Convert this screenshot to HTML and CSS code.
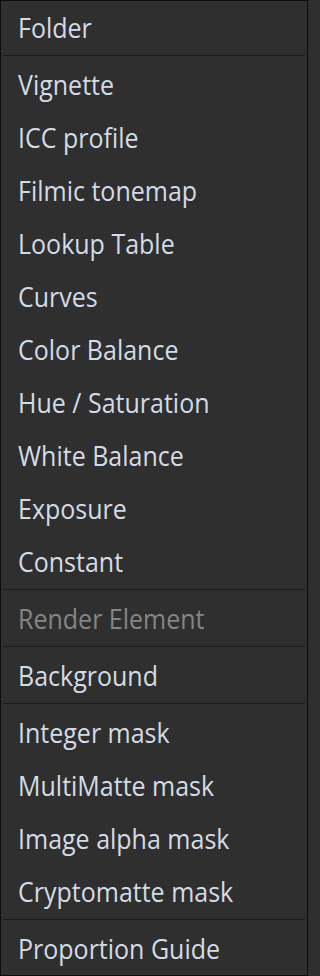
FILE: index.html
```html
<!DOCTYPE html>
<html>
<head>
<meta charset="utf-8">
<link rel="stylesheet" href="styles.css">
</head>
<body>
<div class="menu">
  <div class="item"><span class="label">Folder</span></div>
  <div class="sep"></div>
  <div class="item"><span class="label">Vignette</span></div>
  <div class="item"><span class="label">ICC profile</span></div>
  <div class="item"><span class="label">Filmic tonemap</span></div>
  <div class="item"><span class="label">Lookup Table</span></div>
  <div class="item"><span class="label">Curves</span></div>
  <div class="item"><span class="label">Color Balance</span></div>
  <div class="item"><span class="label">Hue / Saturation</span></div>
  <div class="item"><span class="label">White Balance</span></div>
  <div class="item"><span class="label">Exposure</span></div>
  <div class="item"><span class="label">Constant</span></div>
  <div class="sep"></div>
  <div class="item disabled"><span class="label">Render Element</span></div>
  <div class="sep"></div>
  <div class="item"><span class="label">Background</span></div>
  <div class="sep"></div>
  <div class="item"><span class="label">Integer mask</span></div>
  <div class="item"><span class="label">MultiMatte mask</span></div>
  <div class="item"><span class="label">Image alpha mask</span></div>
  <div class="item"><span class="label">Cryptomatte mask</span></div>
  <div class="sep"></div>
  <div class="item"><span class="label">Proportion Guide</span></div>
</div>
</body>
</html>
```
FILE: styles.css
```css
html, body {
  margin: 0;
  padding: 0;
  background: #2f2f2f;
}
.menu {
  width: 308px;
  height: 976px;
  box-sizing: border-box;
  border: 1px solid #0c0c0c;
  background: #2f2f2f;
  display: flex;
  flex-direction: column;
  font-family: "Open Sans", "Noto Sans", sans-serif;
  font-size: 25px;
}
.item {
  height: 53px;
  box-sizing: border-box;
  padding: 2px 0 0 17px;
  line-height: 51px;
  color: #d3dce6;
  white-space: nowrap;
}
.label {
  display: inline-block;
  transform: scaleY(1.09);
  transform-origin: 50% 35px;
}
.item.disabled {
  color: #858585;
}
.sep {
  height: 1px;
  margin: 1px 2px 2px 2px;
  background: #1c1c1c;
  flex: none;
}
```
